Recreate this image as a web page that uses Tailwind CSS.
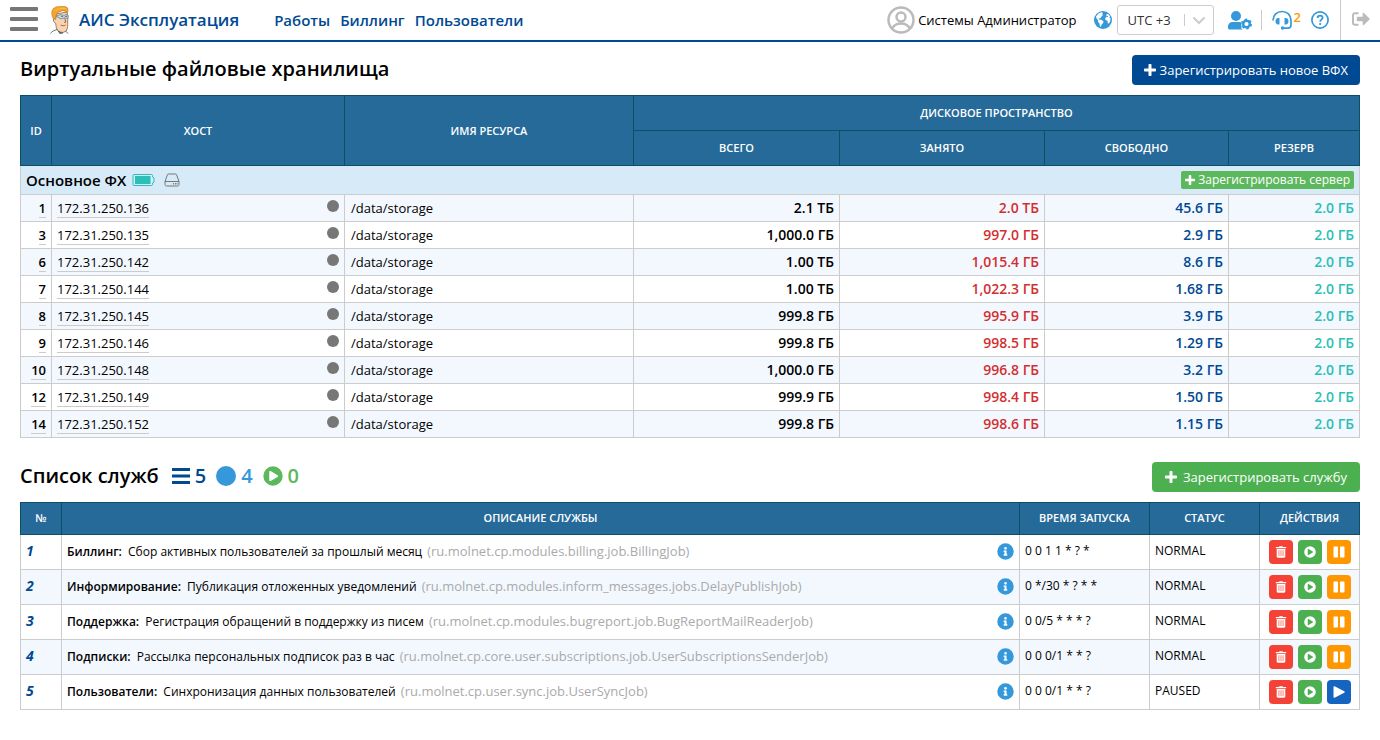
<!DOCTYPE html>
<html lang="ru">
<head>
<meta charset="utf-8">
<meta name="viewport" content="width=device-width, initial-scale=1">
<title>АИС Эксплуатация</title>
<script src="https://cdn.jsdelivr.net/npm/@tailwindcss/browser@4"></script>
</head>
<body class="bg-white font-['Open_Sans',sans-serif] text-[13px] leading-[18px] text-black">

<svg class="hidden" aria-hidden="true">
  <symbol id="plus" viewBox="0 0 12 12"><path fill="currentColor" d="M5.200 0h1.600c.4 0 .7.300.7.700v3.800h3.800c.4 0 .7.300.7.700v1.600c0 .4-.3.700-.7.700H7.500v3.800c0 .4-.3.700-.7.700H5.200c-.4 0-.7-.3-.7-.7V7.500H.7c-.4 0-.7-.3-.7-.7V5.200c0-.4.300-.7.700-.7h3.800V.7c0-.4.300-.7.700-.7z"/></symbol>
  <symbol id="dot" viewBox="0 0 12 12"><circle cx="6" cy="6" r="6" fill="currentColor"/></symbol>
  <symbol id="play-circle" viewBox="0 0 512 512"><path fill="currentColor" d="M256 8a248 248 0 1 0 0 496 248 248 0 0 0 0-496zm116 274L196 383c-16 9-36-2-36-21V150c0-19 20-30 36-21l176 107c16 9 16 37 0 46z"/></symbol>
  <symbol id="info" viewBox="0 0 512 512"><path fill="currentColor" d="M256 8a248 248 0 1 0 0 496 248 248 0 0 0 0-496zm0 110a42 42 0 1 1 0 84 42 42 0 0 1 0-84zm56 254c0 7-5 12-12 12h-88c-7 0-12-5-12-12v-24c0-7 5-12 12-12h12v-64h-12c-7 0-12-5-12-12v-24c0-7 5-12 12-12h64c7 0 12 5 12 12v100h12c7 0 12 5 12 12z"/></symbol>
  <symbol id="trash" viewBox="0 0 12 14"><path fill="currentColor" fill-rule="evenodd" d="M.4 1.200h3.300L4.200.3h3.600l.5.900h3.300c.3 0 .4.200.4.400v.9H0v-.9c0-.2.100-.4.400-.4zM1 3.400h10v8.800c0 .8-.6 1.400-1.400 1.400H2.400c-.8 0-1.400-.6-1.400-1.400zM3.200 5v6.800h.8V5zM5.600 5v6.800h.8V5zM8 5v6.800h.8V5z"/></symbol>
  <symbol id="pause" viewBox="0 0 12 12"><path fill="currentColor" d="M1.500.5H4c.6 0 1 .4 1 1v9c0 .6-.4 1-1 1H1.500c-.6 0-1-.4-1-1v-9c0-.6.4-1 1-1zM8 .5h2.500c.6 0 1 .4 1 1v9c0 .6-.4 1-1 1H8c-.6 0-1-.4-1-1v-9c0-.6.4-1 1-1z"/></symbol>
  <symbol id="play" viewBox="0 0 12 12"><path fill="currentColor" d="M1.600.3l9.600 4.900c.7.400.7 1.200 0 1.600L1.600 11.700C1 12 .5 11.600.5 11V1C.5.4 1 0 1.600.3z"/></symbol>
</svg>

<header class="flex h-[42px] items-center border-b-2 border-[#004a93] pl-[10px]">
  <button type="button" aria-label="Меню" class="flex flex-col gap-[6px] pb-[2px]">
    <span class="h-1 w-7 rounded-[1px] bg-[#777]"></span>
    <span class="h-1 w-7 rounded-[1px] bg-[#777]"></span>
    <span class="h-1 w-7 rounded-[1px] bg-[#777]"></span>
  </button>
  <svg class="ml-3 h-[28px] w-[19px]" viewBox="0 0 57 84" aria-hidden="true">
    <path d="M1 82l8-7 13-5 8 13M36 82l5-10 8 5 5 6" fill="#fff" stroke="#333" stroke-width="2"/>
    <path d="M22 71l7 12h9l3-11z" fill="#4b6f7d"/>
    <path d="M17 24l-2 14c-4-2-6 2-4 7 1 4 4 7 6 7l2 13 3 7c6 6 12 8 18 7l9-4c4-8 5-18 4-27l1-15-3-15z" fill="#fad3b0" stroke="#6b4a38" stroke-width="2"/>
    <path d="M11 39C4 30 3 14 11 7 21-1 41-1 51 4c4 4 4 10 1 16-4-4-9-6-15-6-6 3-12 4-15 6l-3 9-2 12-3-3z" fill="#f9a32b" stroke="#a5651a" stroke-width="1.500"/>
    <path d="M16 14c9-7 20-8 31-6" fill="none" stroke="#ffc23d" stroke-width="3"/>
    <path d="M17 30l8-2c6-3 13-2 16 1 4-3 9-4 13-2v8c-3 3-8 3-11 0-4 4-13 5-16 0z" fill="#c6dae2" stroke="#5f8797" stroke-width="2.500"/>
    <circle cx="36" cy="31" r="2" fill="#222"/><circle cx="48" cy="31" r="2" fill="#222"/>
    <path d="M44 37l4 11-6 1M32 57c5 3 10 3 15 0" fill="none" stroke="#8a5035" stroke-width="2.500"/>
  </svg>
  <a href="#" class="ml-[10px] text-[17px] leading-6 font-semibold text-[#004a93]">АИС Эксплуатация</a>
  <nav class="ml-[35px] flex gap-[10px] text-[15px] font-semibold text-[#004a93]">
    <a href="#">Работы</a>
    <a href="#">Биллинг</a>
    <a href="#">Пользователи</a>
  </nav>
  <div class="ml-auto flex h-full items-center">
    <svg class="size-[28px] text-[#bbb]" viewBox="0 0 28 28" fill="none" stroke="currentColor" stroke-width="2.500" aria-hidden="true"><circle cx="14" cy="14" r="12.500"/><circle cx="14" cy="11" r="4.500"/><path d="M5 22.500c2-3.500 4-5 9-5s7 1.500 9 5"/></svg>
    <a href="#" class="ml-[3px]">Системы Администратор</a>
    <svg class="ml-[17px] size-[18px] text-[#3498db]" viewBox="0 0 18 18" aria-hidden="true"><circle cx="9" cy="9" r="9" fill="currentColor"/><path fill="#fff" d="M2 5.500l2.500-3L7.500 1.200l1.500.8-1 1.500 1.200.6-1.700 1.300-1 1.800-2 .3.500 1 2.200.3 2.300 1.500-.5 2-1.500 1.500-.6 2-1-.3-.4-3-1.500-1.500.2-1.800L2.800 8zM12.500 3.200l1.800-.2 1.900 2.500-.9 1 1.200.8-.2 2.700-1.300 2.500-1.200-.3-.3-2.400-2-.8-.4-1.800 1.500-1.500 1.400.2-.3-1-1.500-.1z"/></svg>
    <div class="relative ml-[5px] h-[30px] w-[97px]">
      <select aria-label="Часовой пояс" class="h-full w-full appearance-none rounded-[3px] border border-[#ccc] bg-white pl-[10px] text-[13px] text-[#333]"><option>UTC +3</option></select>
      <svg class="pointer-events-none absolute top-0 right-0 h-[30px] w-[32px]" viewBox="0 0 32 30" fill="none" stroke="#ccc" aria-hidden="true"><path d="M2.500 9v12"/><path d="M12 13l5 5 5-5" stroke-width="2" stroke-linecap="round"/></svg>
    </div>
    <button type="button" aria-label="Настройки пользователя" class="ml-[14px] text-[#3498db]"><svg class="h-[19px] w-6" viewBox="0 0 24 19"><g fill="currentColor"><circle cx="8" cy="5" r="5"/><path d="M0 16.500C0 12.500 2 11 5 11h6c1 0 1.800.2 2.400.6v5.800l1.400 1H1.500C.6 18.400 0 17.800 0 17z"/></g><circle cx="18.500" cy="13" r="3.300" fill="none" stroke="currentColor" stroke-width="2.400"/><circle cx="18.500" cy="13" r="4.700" fill="none" stroke="currentColor" stroke-width="1.600" stroke-dasharray="2.460 2.460"/></svg></button>
    <span class="ml-[9px] h-5 w-px bg-[#ccc]"></span>
    <button type="button" aria-label="Обращения в поддержку" class="ml-[10px] flex text-[#3498db]"><svg class="size-5" viewBox="0 0 20 20"><path d="M1 10.500C1 5 5 1.500 10 1.500S19 5 19 10.500V15c0 2-1.300 3.200-3.300 3.200H11" fill="none" stroke="currentColor" stroke-width="1.700"/><path fill="currentColor" d="M7.500 8v6.500H6.200C4.500 14.500 3.500 13 3.500 11.200S4.500 8 6.200 8zM12.500 8v6.500h1.300c1.700 0 2.700-1.500 2.700-3.300S15.500 8 13.800 8z"/><circle cx="10.500" cy="18" r="1.700" fill="currentColor"/></svg><span class="ml-[2px] -mt-px text-[13px] leading-4 font-semibold text-[#ff9800]">2</span></button>
    <button type="button" aria-label="Справка" class="ml-[10px] text-[#3498db]"><svg class="size-[18px]" viewBox="0 0 18 18" fill="none" stroke="currentColor"><circle cx="9" cy="9" r="8.100" stroke-width="1.700"/><path d="M6.500 7c.1-1.500 1.100-2.400 2.600-2.400 1.400 0 2.500.9 2.500 2.200 0 1.900-2.400 1.800-2.400 3.900" stroke-width="1.800"/><circle cx="9.200" cy="13" r=".7" fill="currentColor"/></svg></button>
    <button type="button" aria-label="Выйти" class="ml-[11px] flex h-full items-center justify-center border-l border-[#ccc] pr-[10px] pb-[2px] pl-[11px] text-[#bbb]"><svg class="h-[14px] w-[18px]" viewBox="0 0 18 14"><path d="M6.500 1.200H3C1.800 1.200 1 2 1 3.200v7.600c0 1.200.8 2 2 2h3.500" fill="none" stroke="currentColor" stroke-width="1.900"/><path fill="currentColor" d="M5.500 4.700h5.200V1.600c0-.7.700-1 1.200-.5l5.600 5.300c.4.400.4.800 0 1.200l-5.600 5.300c-.5.500-1.200.2-1.200-.5V9.300H5.500c-.4 0-.7-.3-.7-.7V5.400c0-.4.300-.7.700-.7z"/></svg></button>
  </div>
</header>

<main class="px-5 pt-[13px]">
  <section>
    <div class="mb-[10px] flex h-[30px] items-center justify-between">
      <h1 class="pb-[2px] text-[20px] leading-7 font-semibold">Виртуальные файловые хранилища</h1>
      <button type="button" class="flex h-[30px] items-center gap-1 rounded bg-[#004a93] px-3 text-[13px] text-white"><svg class="size-3"><use href="#plus"/></svg>Зарегистрировать новое ВФХ</button>
    </div>
    <table class="w-full table-fixed border-collapse [&_td]:border [&_td]:border-[#ccc] [&_td]:px-[5px] [&_td]:py-1 [&_th]:border [&_th]:border-[#0f4f66] [&_th]:text-[11px] [&_th]:font-semibold [&_a]:border-b [&_a]:border-[#ccc]">
      <colgroup>
        <col class="w-[31px]"><col class="w-[293px]"><col class="w-[289px]"><col class="w-[206px]"><col class="w-[205px]"><col class="w-[184px]"><col class="w-[131px]">
      </colgroup>
      <thead class="bg-[#266a99] text-white">
        <tr class="h-[35px]"><th rowspan="2">ID</th><th rowspan="2">ХОСТ</th><th rowspan="2">ИМЯ РЕСУРСА</th><th colspan="4">ДИСКОВОЕ ПРОСТРАНСТВО</th></tr>
        <tr class="h-[35px]"><th>ВСЕГО</th><th>ЗАНЯТО</th><th>СВОБОДНО</th><th>РЕЗЕРВ</th></tr>
      </thead>
      <tbody>
        <tr class="h-[29px] bg-[#d6eaf8]"><td colspan="7">
          <div class="flex items-center">
            <span class="text-[15px] leading-5 font-semibold">Основное ФХ</span>
            <svg class="ml-[6px] h-[14px] w-[23px] text-[#2bbfb7]" viewBox="0 0 23 14" aria-hidden="true"><path d="M2 1.500h17.500c.5 0 1 .4 1 1V4l1.500.8v4.400l-1.500.8v1.500c0 .6-.5 1-1 1H2c-.6 0-1-.4-1-1v-9c0-.6.4-1 1-1z" fill="none" stroke="currentColor"/><path fill="currentColor" d="M3 3h15.500v8H3z"/></svg>
            <svg class="ml-[9px] h-[14px] w-4 text-[#777]" viewBox="0 0 16 14" fill="none" stroke="currentColor" aria-hidden="true"><path d="M1 8.500L3.300 2c.2-.7.7-1 1.300-1h6.800c.6 0 1.100.3 1.300 1L15 8.500v3c0 .9-.6 1.500-1.500 1.500h-11C1.600 13 1 12.400 1 11.500zM1 8.500h14"/><path d="M9.500 10v1.500M11.500 10v1.500M13 10v1.500"/></svg>
            <button type="button" class="ml-auto flex h-[18px] items-center gap-[3px] rounded-[2px] bg-[#5cb85c] px-1 text-xs leading-[18px] text-white"><svg class="size-[10px]"><use href="#plus"/></svg>Зарегистрировать сервер</button>
          </div>
        </td></tr>
      </tbody>
      <tbody class="[&_tr]:h-[27px] [&_tr:nth-child(odd)]:bg-[#f3f8ff] [&_td:nth-child(1)]:text-right [&_td:nth-child(1)]:font-semibold [&_td:nth-child(3)]:pl-[6px] [&_td:nth-child(n+4)]:text-right [&_td:nth-child(n+4)]:text-sm [&_td:nth-child(n+4)]:leading-[18px] [&_td:nth-child(n+4)]:font-semibold [&_td:nth-child(5)]:text-[#d32f2f] [&_td:nth-child(6)]:text-[#004a93] [&_td:nth-child(7)]:text-[#2bbfb7] [&_svg]:float-right [&_svg]:mt-[1px] [&_svg]:size-3 [&_svg]:text-[#777]">
        <tr><td><a href="#">1</a></td><td><a href="#">172.31.250.136</a><svg><use href="#dot"/></svg></td><td>/data/storage</td><td>2.1 ТБ</td><td>2.0 ТБ</td><td>45.6 ГБ</td><td>2.0 ГБ</td></tr>
        <tr><td><a href="#">3</a></td><td><a href="#">172.31.250.135</a><svg><use href="#dot"/></svg></td><td>/data/storage</td><td>1,000.0 ГБ</td><td>997.0 ГБ</td><td>2.9 ГБ</td><td>2.0 ГБ</td></tr>
        <tr><td><a href="#">6</a></td><td><a href="#">172.31.250.142</a><svg><use href="#dot"/></svg></td><td>/data/storage</td><td>1.00 ТБ</td><td>1,015.4 ГБ</td><td>8.6 ГБ</td><td>2.0 ГБ</td></tr>
        <tr><td><a href="#">7</a></td><td><a href="#">172.31.250.144</a><svg><use href="#dot"/></svg></td><td>/data/storage</td><td>1.00 ТБ</td><td>1,022.3 ГБ</td><td>1.68 ГБ</td><td>2.0 ГБ</td></tr>
        <tr><td><a href="#">8</a></td><td><a href="#">172.31.250.145</a><svg><use href="#dot"/></svg></td><td>/data/storage</td><td>999.8 ГБ</td><td>995.9 ГБ</td><td>3.9 ГБ</td><td>2.0 ГБ</td></tr>
        <tr><td><a href="#">9</a></td><td><a href="#">172.31.250.146</a><svg><use href="#dot"/></svg></td><td>/data/storage</td><td>999.8 ГБ</td><td>998.5 ГБ</td><td>1.29 ГБ</td><td>2.0 ГБ</td></tr>
        <tr><td><a href="#">10</a></td><td><a href="#">172.31.250.148</a><svg><use href="#dot"/></svg></td><td>/data/storage</td><td>1,000.0 ГБ</td><td>996.8 ГБ</td><td>3.2 ГБ</td><td>2.0 ГБ</td></tr>
        <tr><td><a href="#">12</a></td><td><a href="#">172.31.250.149</a><svg><use href="#dot"/></svg></td><td>/data/storage</td><td>999.9 ГБ</td><td>998.4 ГБ</td><td>1.50 ГБ</td><td>2.0 ГБ</td></tr>
        <tr><td><a href="#">14</a></td><td><a href="#">172.31.250.152</a><svg><use href="#dot"/></svg></td><td>/data/storage</td><td>999.8 ГБ</td><td>998.6 ГБ</td><td>1.15 ГБ</td><td>2.0 ГБ</td></tr>
      </tbody>
    </table>
  </section>

  <section class="mt-6">
    <div class="mb-[10px] flex h-[30px] items-center">
      <h2 class="pb-[2px] text-[20px] leading-7 font-semibold">Список служб</h2>
      <div class="ml-[13px] flex items-center pb-[2px] text-[20px] leading-7 font-semibold">
        <svg class="h-4 w-[18px] text-[#004a93]" viewBox="0 0 18 16" stroke="currentColor" stroke-width="3" aria-hidden="true"><path d="M0 1.500h18M0 8h18M0 14.500h18"/></svg>
        <span class="ml-[5px] text-[#004a93]">5</span>
        <svg class="ml-[10px] size-5 text-[#3498db]"><use href="#dot"/></svg>
        <span class="ml-[5px] text-[#3498db]">4</span>
        <svg class="ml-[10px] size-5 text-[#5cb85c]"><use href="#play-circle"/></svg>
        <span class="ml-[5px] text-[#5cb85c]">0</span>
      </div>
      <button type="button" class="ml-auto flex h-[30px] items-center gap-[6px] rounded bg-[#4caf50] px-[13px] text-[13px] text-white"><svg class="size-3"><use href="#plus"/></svg>Зарегистрировать службу</button>
    </div>
    <table class="w-full table-fixed border-collapse text-xs leading-4 [&_td]:border [&_td]:border-[#ccc] [&_td]:px-[5px] [&_td]:pt-0 [&_td]:pb-[2px] [&_th]:border [&_th]:border-[#0f4f66] [&_th]:pb-[2px] [&_th]:text-[11px] [&_th]:font-semibold">
      <colgroup>
        <col class="w-[41px]"><col><col class="w-[130px]"><col class="w-[110px]"><col class="w-[100px]">
      </colgroup>
      <thead class="bg-[#266a99] text-white">
        <tr class="h-[32px]"><th>№</th><th>ОПИСАНИЕ СЛУЖБЫ</th><th>ВРЕМЯ ЗАПУСКА</th><th>СТАТУС</th><th>ДЕЙСТВИЯ</th></tr>
      </thead>
      <tbody class="[&_tr]:h-[35px] [&_tr:nth-child(even)]:bg-[#f3f8ff] [&_td:nth-child(1)]:text-sm [&_td:nth-child(1)]:font-bold [&_td:nth-child(1)]:text-[#004a93] [&_td:nth-child(1)]:italic [&_b]:mr-[3px] [&_b]:font-semibold [&_i]:ml-[2px] [&_i]:text-[13px] [&_i]:text-[#aaa] [&_i]:not-italic [&_td>svg]:float-right [&_td>svg]:size-[17px] [&_td>svg]:text-[#3498db] [&_div]:flex [&_div]:justify-center [&_div]:gap-[5px] [&_div]:pt-[2px] [&_button]:flex [&_button]:size-6 [&_button]:items-center [&_button]:justify-center [&_button]:rounded [&_button]:text-white [&_button>svg]:size-3">
        <tr><td>1</td><td><svg><use href="#info"/></svg><b>Биллинг:</b> Сбор активных пользователей за прошлый месяц <i>(ru.molnet.cp.modules.billing.job.BillingJob)</i></td><td>0 0 1 1 * ? *</td><td>NORMAL</td><td><div><button type="button" aria-label="Удалить" class="bg-[#f44336]"><svg><use href="#trash"/></svg></button><button type="button" aria-label="Запустить" class="bg-[#4caf50]"><svg><use href="#play-circle"/></svg></button><button type="button" aria-label="Приостановить" class="bg-[#ff9800]"><svg><use href="#pause"/></svg></button></div></td></tr>
        <tr><td>2</td><td><svg><use href="#info"/></svg><b>Информирование:</b> Публикация отложенных уведомлений <i>(ru.molnet.cp.modules.inform_messages.jobs.DelayPublishJob)</i></td><td>0 */30 * ? * *</td><td>NORMAL</td><td><div><button type="button" aria-label="Удалить" class="bg-[#f44336]"><svg><use href="#trash"/></svg></button><button type="button" aria-label="Запустить" class="bg-[#4caf50]"><svg><use href="#play-circle"/></svg></button><button type="button" aria-label="Приостановить" class="bg-[#ff9800]"><svg><use href="#pause"/></svg></button></div></td></tr>
        <tr><td>3</td><td><svg><use href="#info"/></svg><b>Поддержка:</b> Регистрация обращений в поддержку из писем <i>(ru.molnet.cp.modules.bugreport.job.BugReportMailReaderJob)</i></td><td>0 0/5 * * * ?</td><td>NORMAL</td><td><div><button type="button" aria-label="Удалить" class="bg-[#f44336]"><svg><use href="#trash"/></svg></button><button type="button" aria-label="Запустить" class="bg-[#4caf50]"><svg><use href="#play-circle"/></svg></button><button type="button" aria-label="Приостановить" class="bg-[#ff9800]"><svg><use href="#pause"/></svg></button></div></td></tr>
        <tr><td>4</td><td><svg><use href="#info"/></svg><b>Подписки:</b> Рассылка персональных подписок раз в час <i>(ru.molnet.cp.core.user.subscriptions.job.UserSubscriptionsSenderJob)</i></td><td>0 0 0/1 * * ?</td><td>NORMAL</td><td><div><button type="button" aria-label="Удалить" class="bg-[#f44336]"><svg><use href="#trash"/></svg></button><button type="button" aria-label="Запустить" class="bg-[#4caf50]"><svg><use href="#play-circle"/></svg></button><button type="button" aria-label="Приостановить" class="bg-[#ff9800]"><svg><use href="#pause"/></svg></button></div></td></tr>
        <tr><td>5</td><td><svg><use href="#info"/></svg><b>Пользователи:</b> Синхронизация данных пользователей <i>(ru.molnet.cp.user.sync.job.UserSyncJob)</i></td><td>0 0 0/1 * * ?</td><td>PAUSED</td><td><div><button type="button" aria-label="Удалить" class="bg-[#f44336]"><svg><use href="#trash"/></svg></button><button type="button" aria-label="Запустить" class="bg-[#4caf50]"><svg><use href="#play-circle"/></svg></button><button type="button" aria-label="Возобновить" class="bg-[#1565c0]"><svg><use href="#play"/></svg></button></div></td></tr>
      </tbody>
    </table>
  </section>
</main>
</body>
</html>
